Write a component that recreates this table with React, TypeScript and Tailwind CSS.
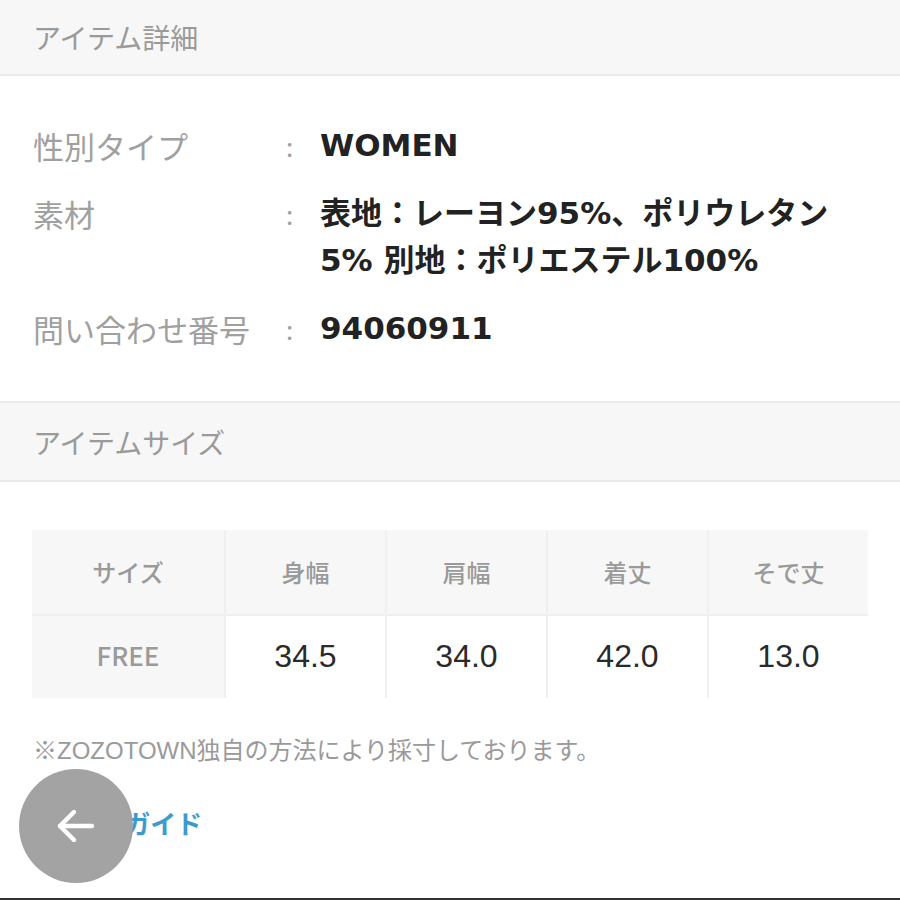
import React from 'react';

const details = [
  { label: '性別タイプ', value: ['WOMEN'] },
  { label: '素材', value: ['表地：レーヨン95%、ポリウレタン', '5% 別地：ポリエステル100%'] },
  { label: '問い合わせ番号', value: ['94060911'] },
];

const heads = ['身幅', '肩幅', '着丈', 'そで丈'];
const sizes = ['34.5', '34.0', '42.0', '13.0'];

const App: React.FC = () => {
  return (
    <div className="relative w-[900px] h-[900px] overflow-hidden bg-white flex flex-col font-['Noto_Sans_CJK_JP',sans-serif]">
      {/* Item detail header */}
      <div className="h-[76px] shrink-0 bg-[#f7f7f7] border-b-2 border-[#ebebeb] flex items-center px-[33px]">
        <h2 className="text-[28px] text-[#9a9a9a] leading-none">アイテム詳細</h2>
      </div>

      <div className="pt-[46px] pb-[49px] px-[33px] flex flex-col gap-[21px]">
        {details.map((row) => (
          <div key={row.label} className="flex items-start leading-[47px]">
            <div className="w-[253px] text-[31px] text-[#a0a0a0]">{row.label}</div>
            <div className="w-[34px] text-[26px] text-[#a0a0a0]">:</div>
            <div className="flex-1 text-[31px] font-bold text-[#222] font-['DejaVu_Sans','Noto_Sans_CJK_JP',sans-serif]">
              {row.value.map((v) => (
                <div key={v}>{v}</div>
              ))}
            </div>
          </div>
        ))}
      </div>

      {/* Item size header */}
      <div className="h-[81px] shrink-0 bg-[#f7f7f7] border-y-2 border-[#ebebeb] flex items-center px-[33px]">
        <h2 className="text-[28px] text-[#9a9a9a] leading-none">アイテムサイズ</h2>
      </div>

      <div className="px-[32px] pt-[48px]">
        <div className="grid grid-cols-[192px_1fr_1fr_1fr_1fr] gap-[2px] bg-[#f0f0f0]">
          <div className="h-[84px] bg-[#f7f7f7] flex items-center justify-center text-[24px] font-medium text-[#9a9a9a]">
            サイズ
          </div>
          {heads.map((h) => (
            <div key={h} className="h-[84px] bg-[#f7f7f7] flex items-center justify-center text-[24px] font-medium text-[#9a9a9a]">
              {h}
            </div>
          ))}
          <div className="h-[82px] pb-[6px] bg-[#f7f7f7] flex items-center justify-center text-[26px] font-medium text-[#9a9a9a]">
            FREE
          </div>
          {sizes.map((s, i) => (
            <div key={i} className="h-[82px] pb-[2px] bg-white flex items-center justify-center text-[32px] text-[#2a2a2a] font-['Liberation_Sans',sans-serif]">
              {s}
            </div>
          ))}
        </div>
      </div>

      <p className="px-[33px] mt-[37px] text-[24px] leading-[32px] text-[#9a9a9a] font-['Liberation_Sans','Noto_Sans_CJK_JP',sans-serif]">
        ※ZOZOTOWN独自の方法により採寸しております。
      </p>

      <a className="pl-[47px] mt-[38px] text-[26px] leading-[36px] font-bold text-[#3b9bcf]">
        サイズガイド
      </a>

      <div className="mt-auto h-[2px] bg-[#333]" />

      {/* floating back button */}
      <button className="absolute left-[19px] top-[769px] w-[114px] h-[114px] rounded-full bg-[#a3a3a3] flex items-center justify-center">
        <svg width="48" height="48" viewBox="0 0 24 24" fill="none" stroke="white" strokeWidth="2.2" strokeLinecap="round" strokeLinejoin="round">
          <path d="M20 12H4" />
          <path d="M11 5l-7 7 7 7" />
        </svg>
      </button>
    </div>
  );
};

export default App;
